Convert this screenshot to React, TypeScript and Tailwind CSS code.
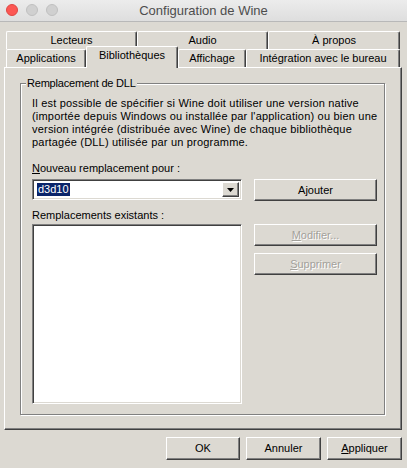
import React from "react";

const raised =
  "border border-t-white border-l-white border-r-[#404040] border-b-[#404040] shadow-[inset_-1px_-1px_0_#808080]";
const sunken =
  "border border-t-[#808080] border-l-[#808080] border-r-white border-b-white shadow-[inset_1px_1px_0_#404040,inset_-1px_-1px_0_#dcd9d2]";

function Tab({ label, w, selected }: { label: string; w: string; selected?: boolean }) {
  return (
    <div
      className={
        "flex justify-center rounded-t-[2px] border-t border-l border-r border-t-white border-l-white border-r-[#404040] shadow-[inset_-1px_0_0_#808080] bg-[#dcd9d2] " +
        w +
        (selected ? " h-[22px] -mt-[3px] relative z-10 pt-[2px]" : " h-full pt-[2px]")
      }
    >
      {label}
    </div>
  );
}

function Btn({
  children,
  w,
  h,
  disabled,
}: {
  children: React.ReactNode;
  w: string;
  h: string;
  disabled?: boolean;
}) {
  return (
    <div
      className={
        "flex items-center justify-center bg-[#dcd9d2] " +
        raised +
        " " +
        w +
        " " +
        h +
        (disabled ? " text-[#a3a19b] [text-shadow:1px_1px_0_#ffffff]" : " text-black")
      }
    >
      {children}
    </div>
  );
}

export default function App() {
  return (
    <div
      className="w-[407px] h-[468px] bg-[#dcd9d2] flex flex-col overflow-hidden text-[11px] leading-[13px] text-black"
      style={{ fontFamily: '"Liberation Sans", Arial, sans-serif' }}
    >
      {/* Title bar */}
      <div className="relative h-[22px] shrink-0 bg-gradient-to-b from-[#ececec] to-[#dedede] border-b border-[#b8b8b8] flex items-center justify-center">
        <div className="absolute left-[6px] top-[4px] flex gap-[8px]">
          <div className="w-[12px] h-[12px] rounded-full bg-[#fc5753] border border-[#df4744]" />
          <div className="w-[12px] h-[12px] rounded-full bg-[#d0d0d0] border border-[#c0c0c0]" />
          <div className="w-[12px] h-[12px] rounded-full bg-[#d0d0d0] border border-[#c0c0c0]" />
        </div>
        <span className="text-[13px] leading-[16px] text-[#4d4d4d]">Configuration de Wine</span>
      </div>

      {/* Tabs */}
      <div className="ml-[4px] mt-[9px] w-[398px] shrink-0">
        <div className="flex pl-[2px] h-[18px]">
          <Tab label="Lecteurs" w="w-[131px]" />
          <Tab label="Audio" w="w-[131px]" />
          <Tab label="À propos" w="w-[132px]" />
        </div>
        <div className="flex pl-[2px] h-[18px] relative z-10">
          <Tab label="Applications" w="w-[80px]" />
          <Tab label="Bibliothèques" w="w-[92px]" selected />
          <Tab label="Affichage" w="w-[68px]" />
          <Tab label="Intégration avec le bureau" w="w-[154px]" />
        </div>
      </div>

      {/* Panel */}
      <div className="ml-[4px] w-[398px] h-[363px] shrink-0 border border-t-white border-l-white border-r-[#404040] border-b-[#404040] shadow-[inset_-1px_-1px_0_#808080] pt-[15px] pl-[15px]">
        <div className="relative w-[365px] h-[332px] border border-[#808080] shadow-[1px_1px_0_#ffffff,inset_1px_1px_0_#ffffff] pl-[11px] pt-[13px]">
          <div className="absolute left-[5px] -top-[7px] px-[1px] bg-[#dcd9d2] tracking-[-0.2px]">Remplacement de DLL</div>
          <div className="leading-[13px] tracking-[0.2px]">
            Il est possible de spécifier si Wine doit utiliser une version native
            <br />
            (importée depuis Windows ou installée par l'application) ou bien une
            <br />
            version intégrée (distribuée avec Wine) de chaque bibliothèque
            <br />
            partagée (DLL) utilisée par un programme.
          </div>
          <div className="mt-[13px]">
            <span className="underline underline-offset-1">N</span>ouveau remplacement pour :
          </div>
          <div className="flex mt-[4px] items-start">
            <div className={"w-[210px] h-[21px] bg-white flex items-center p-[2px] " + sunken}>
              <div className="flex-1 flex items-center pl-[2px]">
                <span className="bg-[#0a246a] text-white px-[1px] h-[13px]">d3d10</span>
              </div>
              <div className={"w-[17px] h-full flex items-center justify-center " + raised + " bg-[#dcd9d2]"}>
                <svg width="7" height="4" viewBox="0 0 7 4">
                  <polygon points="0,0 7,0 3.5,4" fill="#000" />
                </svg>
              </div>
            </div>
            <div className="ml-[12px]">
              <Btn w="w-[123px]" h="h-[22px]">Ajouter</Btn>
            </div>
          </div>
          <div className="mt-[8px]">Remplacements existants :</div>
          <div className="flex mt-[2px] items-start">
            <div className={"w-[210px] h-[180px] bg-white " + sunken} />
            <div className="ml-[12px] flex flex-col gap-[7px]">
              <Btn w="w-[123px]" h="h-[22px]" disabled>
                <span>
                  <span className="underline underline-offset-1">M</span>odifier...
                </span>
              </Btn>
              <Btn w="w-[123px]" h="h-[22px]" disabled>
                <span>
                  <span className="underline underline-offset-1">S</span>upprimer
                </span>
              </Btn>
            </div>
          </div>
        </div>
      </div>

      {/* Bottom buttons */}
      <div className="flex justify-end gap-[6px] mt-[7px] pr-[5px]">
        <Btn w="w-[74px]" h="h-[23px]">OK</Btn>
        <Btn w="w-[75px]" h="h-[23px]">Annuler</Btn>
        <Btn w="w-[75px]" h="h-[23px]">
          <span>
            <span className="underline underline-offset-1">A</span>ppliquer
          </span>
        </Btn>
      </div>
    </div>
  );
}
